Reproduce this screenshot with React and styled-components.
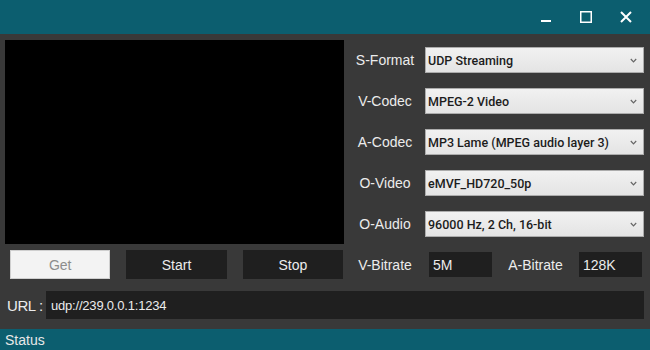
import React from "react";
import styled, { createGlobalStyle } from "styled-components";

const Global = createGlobalStyle`
  html, body { margin: 0; padding: 0; background: #393939; }
  body { font-family: "Liberation Sans", Arial, sans-serif; }
  * { box-sizing: border-box; }
`;

const Window = styled.div`
  width: 650px;
  height: 350px;
  display: flex;
  flex-direction: column;
  background: #393939;
  color: #e8e8e8;
  overflow: hidden;
`;

const TitleBar = styled.div`
  height: 34px;
  background: #0c5e6f;
  display: flex;
  justify-content: flex-end;
  align-items: center;
  padding-right: 4px;
`;

const WinButton = styled.div`
  width: 40px;
  height: 34px;
  display: flex;
  align-items: center;
  justify-content: center;
`;

const Main = styled.div`
  flex: 1;
  display: flex;
  flex-direction: column;
  padding: 6px 6px 0 5px;
`;

const Top = styled.div`
  display: grid;
  grid-template-columns: 339px 1fr;
  column-gap: 6px;
`;

const Video = styled.div`
  height: 204px;
  background: #000;
`;

const Form = styled.div`
  display: flex;
  flex-direction: column;
  gap: 15px;
  padding-top: 7px;
`;

const Row = styled.div`
  display: flex;
  align-items: center;
  height: 26px;
`;

const Label = styled.div`
  width: ${(p) => p.$w || 70}px;
  text-align: center;
  font-size: 14px;
  color: #ececec;
  flex-shrink: 0;
  white-space: nowrap;
`;

const Select = styled.div`
  flex: 1;
  margin-left: 5px;
  height: 26px;
  background: linear-gradient(#f1f1f1, #e4e4e4);
  border: 1px solid #acacac;
  display: flex;
  align-items: center;
  justify-content: space-between;
  padding: 0 6px 0 2px;
  font-family: Roboto, "Liberation Sans", sans-serif;
  font-size: 12.5px;
  font-weight: 500;
  color: #1c1c1c;
`;

const Bottom = styled.div`
  display: grid;
  grid-template-columns: 339px 1fr;
  column-gap: 6px;
  margin-top: 6px;
  height: 29px;
`;

const Buttons = styled.div`
  display: flex;
  gap: 16px;
  padding: 0 1px 0 5px;
`;

const Button = styled.div`
  flex: 1;
  display: flex;
  align-items: center;
  justify-content: center;
  font-size: 14px;
  background: ${(p) => (p.$disabled ? "#f3f3f3" : "#1f1f1f")};
  color: ${(p) => (p.$disabled ? "#8d8d8d" : "#ececec")};
  border: 1px solid ${(p) => (p.$disabled ? "#cfcfcf" : "#1f1f1f")};
`;

const Rates = styled.div`
  display: flex;
  align-items: center;
`;

const RateInput = styled.div`
  width: 63px;
  height: 25px;
  margin-left: ${(p) => p.$ml}px;
  background: #1f1f1f;
  display: flex;
  align-items: center;
  padding-left: 4px;
  font-size: 14px;
  color: #ececec;
`;

const UrlRow = styled.div`
  display: flex;
  align-items: center;
  margin-top: 12px;
  height: 28px;
  padding-left: 2px;
`;

const UrlLabel = styled.div`
  font-size: 15px;
  letter-spacing: -0.4px;
  color: #ececec;
  width: 39px;
  flex-shrink: 0;
  white-space: nowrap;
`;

const UrlInput = styled.div`
  flex: 1;
  height: 28px;
  background: #1f1f1f;
  display: flex;
  align-items: center;
  padding-left: 5px;
  font-size: 13px;
  color: #ececec;
  letter-spacing: -0.2px;
`;

const StatusBar = styled.div`
  height: 21px;
  background: #0c5e6f;
  display: flex;
  align-items: center;
  padding-left: 5px;
  font-size: 14px;
  color: #e8e8e8;
`;

const Chevron = () => (
  <svg width="7" height="5" viewBox="0 0 7 5">
    <path d="M0.8 1 L3.5 3.8 L6.2 1" fill="none" stroke="#666" strokeWidth="1.2" />
  </svg>
);

const fields = [
  ["S-Format", "UDP Streaming"],
  ["V-Codec", "MPEG-2 Video"],
  ["A-Codec", "MP3 Lame (MPEG audio layer 3)"],
  ["O-Video", "eMVF_HD720_50p"],
  ["O-Audio", "96000 Hz, 2 Ch, 16-bit"],
];

export default function App() {
  return (
    <>
      <Global />
      <Window>
        <TitleBar>
          <WinButton>
            <svg width="12" height="12" viewBox="0 0 12 12">
              <rect x="1" y="9" width="10" height="2" fill="#fff" />
            </svg>
          </WinButton>
          <WinButton>
            <svg width="12" height="12" viewBox="0 0 12 12">
              <rect x="0.75" y="0.75" width="10.5" height="10.5" fill="none" stroke="#fff" strokeWidth="1.5" />
            </svg>
          </WinButton>
          <WinButton>
            <svg width="12" height="12" viewBox="0 0 12 12">
              <path d="M1 1 L11 11 M11 1 L1 11" stroke="#fff" strokeWidth="2" />
            </svg>
          </WinButton>
        </TitleBar>
        <Main>
          <Top>
            <Video />
            <Form>
              {fields.map(([label, value]) => (
                <Row key={label}>
                  <Label>{label}</Label>
                  <Select>
                    <span>{value}</span>
                    <Chevron />
                  </Select>
                </Row>
              ))}
            </Form>
          </Top>
          <Bottom>
            <Buttons>
              <Button $disabled>Get</Button>
              <Button>Start</Button>
              <Button>Stop</Button>
            </Buttons>
            <Rates>
              <Label>V-Bitrate</Label>
              <RateInput $ml={9}>5M</RateInput>
              <Label $w={87}>A-Bitrate</Label>
              <RateInput $ml={0}>128K</RateInput>
            </Rates>
          </Bottom>
          <UrlRow>
            <UrlLabel>URL :</UrlLabel>
            <UrlInput>udp://239.0.0.1:1234</UrlInput>
          </UrlRow>
        </Main>
        <StatusBar>Status</StatusBar>
      </Window>
    </>
  );
}
